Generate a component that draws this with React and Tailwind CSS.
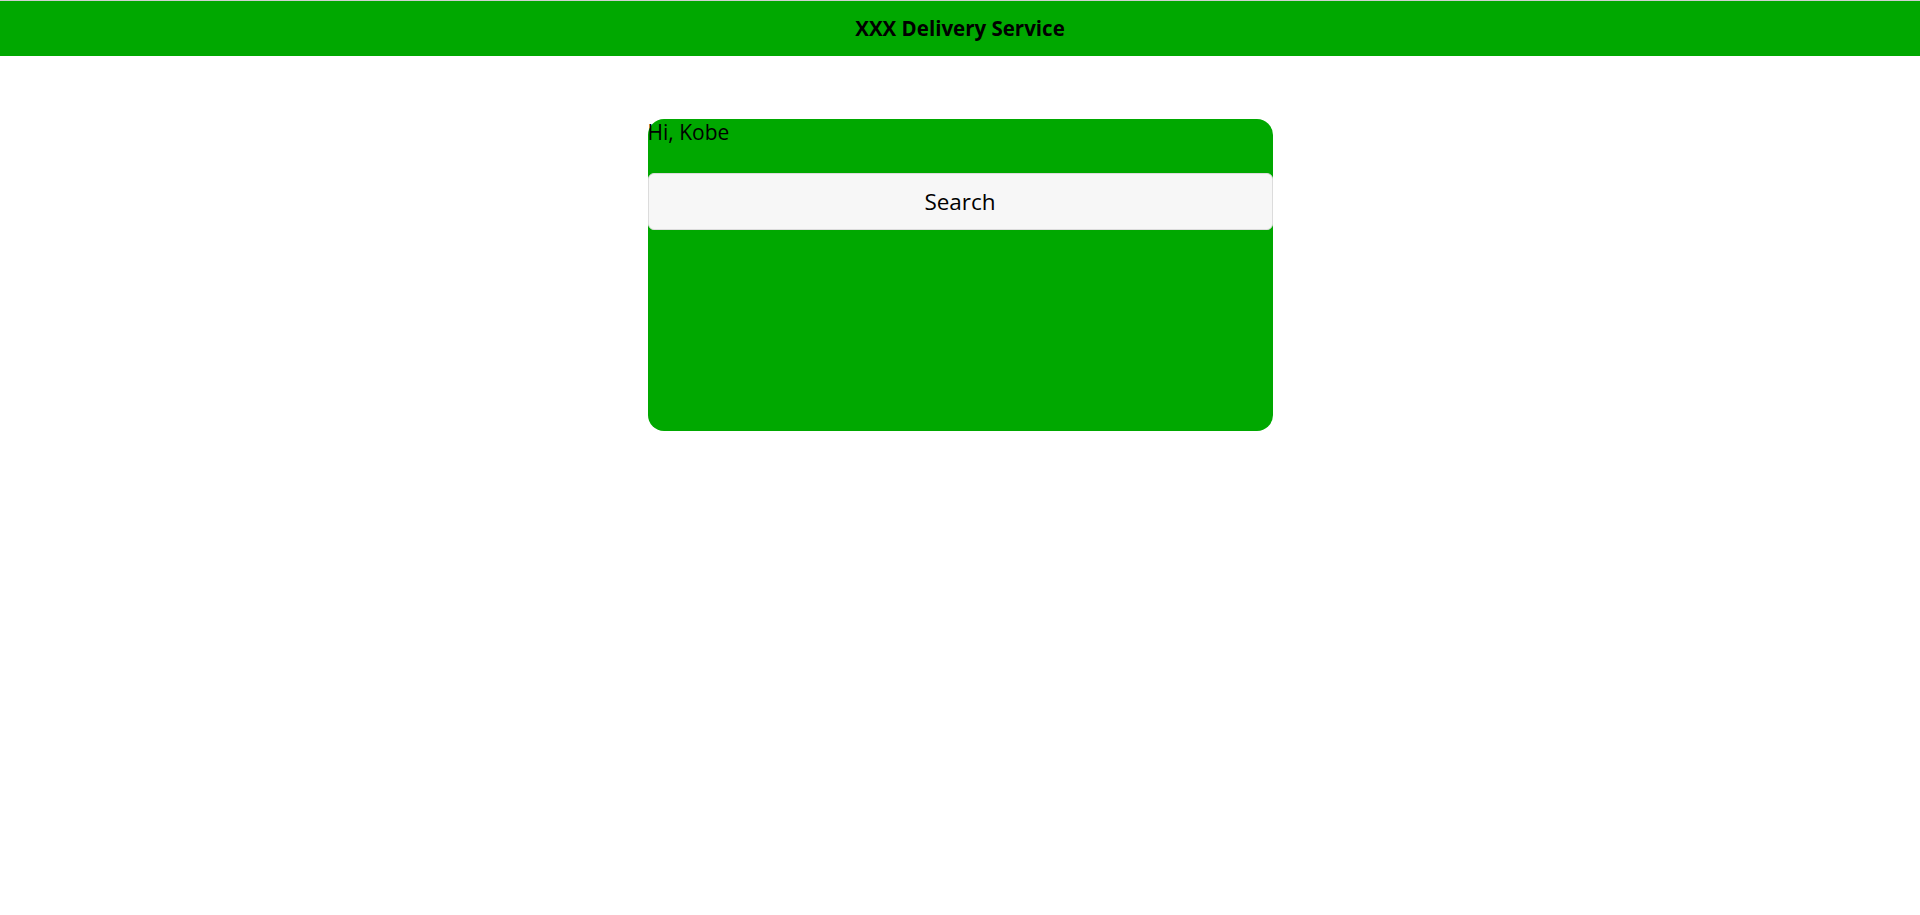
export default function App() {
  return (
    <div className="min-h-[915px] bg-white" style={{ fontFamily: '"Open Sans", "Noto Sans", sans-serif' }}>
      <div className="border-t border-[#d0d0d0] bg-[#00a800] h-[56px] flex items-center justify-center">
        <span className="text-[20.5px] font-bold text-black">XXX Delivery Service</span>
      </div>
      <div className="flex justify-center pt-[63px]">
        <div className="w-[625px] h-[312px] bg-[#00a800] rounded-[16px] flex flex-col">
          <div className="text-[21px] leading-[27px] text-black">Hi, Kobe</div>
          <div className="mt-[27px] h-[57px] bg-[#f7f7f7] border border-[#dcdcdc] rounded-[6px] flex items-center justify-center">
            <span className="text-[22.5px] leading-[30px] text-black">Search</span>
          </div>
        </div>
      </div>
    </div>
  );
}
